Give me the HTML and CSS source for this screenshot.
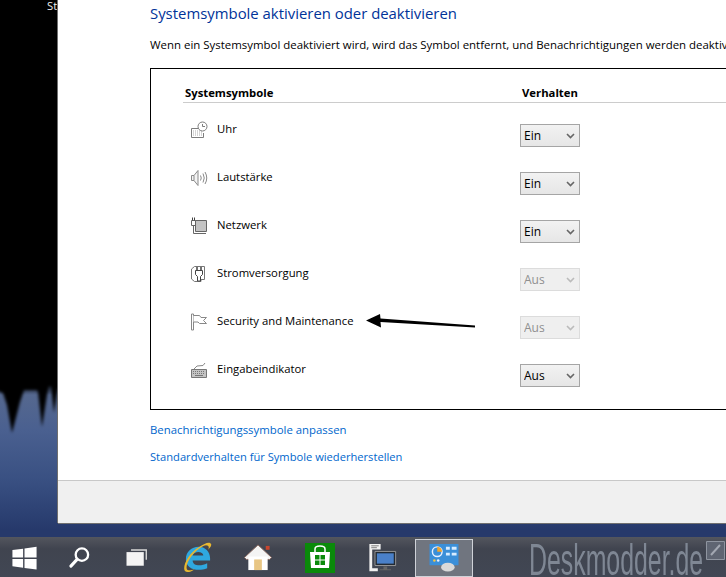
FILE: index.html
```html
<!DOCTYPE html>
<html lang="de">
<head>
<meta charset="utf-8">
<title>Systemsymbole</title>
<link rel="stylesheet" href="styles.css">
</head>
<body>
<div class="desk">
  <div class="wall">
    <span class="wall-label">Start</span>
    <svg class="spikes" width="58" height="100" viewBox="0 0 58 100"><defs><filter id="b"><feGaussianBlur stdDeviation="1.800"/></filter></defs><path filter="url(#b)" d="M-4-6H62V48H58L54 73 51 46H49L47 55 42 87 38 52 37 50H24L20 62 12 93 7 65 3 53-4 50Z" fill="#000"/></svg>
  </div>
  <main class="window">
    <div class="content">
      <h1 class="title">Systemsymbole aktivieren oder deaktivieren</h1>
      <p class="desc">Wenn ein Systemsymbol deaktiviert wird, wird das Symbol entfernt, und Benachrichtigungen werden deaktiviert.</p>
      <section class="box">
        <div class="head"><span class="col-a">Systemsymbole</span><span class="col-b">Verhalten</span></div>
        <div class="row">
          <div class="name"><svg class="ico" viewBox="0 0 18 18" fill="none" stroke="#7d7d7d"><path d="M1.500 7.500H9M1.500 7.500V16.500H13.500V12" /><path d="M3 10H12M3 12H12M3 14H12" stroke="#aaa" stroke-dasharray="1 1"/><circle cx="12.500" cy="5.500" r="4.500" fill="#fff"/><path d="M12.500 3V5.500H15"/></svg><span class="label">Uhr</span></div>
          <div class="pick"><select><option>Ein</option></select><svg class="chev" viewBox="0 0 9 6"><path d="M1 1L4.500 4.500 8 1" fill="none" stroke="#666" stroke-width="1.600"/></svg></div>
        </div>
        <div class="row">
          <div class="name"><svg class="ico" viewBox="0 0 18 18" fill="none" stroke="#8a8a8a"><path d="M1.500 6.500H4V11.500H1.500ZM4 6.500L8 1.500V16.500L4 11.500" fill="#f4f4f4"/><path d="M10.500 6.500Q12 9 10.500 11.500M13 4.500Q15.500 9 13 13.500M15 3Q18.500 9 15 15"/></svg><span class="label">Lautstärke</span></div>
          <div class="pick"><select><option>Ein</option></select><svg class="chev" viewBox="0 0 9 6"><path d="M1 1L4.500 4.500 8 1" fill="none" stroke="#666" stroke-width="1.600"/></svg></div>
        </div>
        <div class="row">
          <div class="name"><svg class="ico" viewBox="0 0 18 18" fill="none" stroke="#666"><path d="M5.500 3.500H16.500V14.500H5.500Z" fill="#c4c4c4"/><path d="M1.500 3.500H5.500V8.500H1.500ZM3.500 8.500V16.500H16"/><path d="M2.500 0.500V3.500M4.500 0.500V3.500" stroke="#444"/></svg><span class="label">Netzwerk</span></div>
          <div class="pick"><select><option>Ein</option></select><svg class="chev" viewBox="0 0 9 6"><path d="M1 1L4.500 4.500 8 1" fill="none" stroke="#666" stroke-width="1.600"/></svg></div>
        </div>
        <div class="row">
          <div class="name"><svg class="ico" viewBox="0 0 18 18" fill="none" stroke="#777"><path d="M4.500 1.500H14.500V14.500H11V16.500H4.500L1.500 14V4Z"/><path d="M7 2V5.500M11 2V5.500" stroke="#444" stroke-width="1.500"/><path d="M5.500 5.500H12.500V9.500L10.500 11.500V16H7.500V11.500L5.500 9.500Z" fill="#fff" stroke="#444"/></svg><span class="label">Stromversorgung</span></div>
          <div class="pick"><select disabled><option>Aus</option></select><svg class="chev" viewBox="0 0 9 6"><path d="M1 1L4.500 4.500 8 1" fill="none" stroke="#bbb" stroke-width="1.600"/></svg></div>
        </div>
        <div class="row">
          <div class="name"><svg class="ico" viewBox="0 0 18 18" fill="none" stroke="#888"><path d="M1.500 1V17H3.500V1Z"/><path d="M3.500 2.500H9.500L11 4.500H16.500L13.500 7.500 16.500 10.500H9.500L8 9H3.500" fill="#fff"/></svg><span class="label">Security and Maintenance</span></div>
          <div class="pick"><select disabled><option>Aus</option></select><svg class="chev" viewBox="0 0 9 6"><path d="M1 1L4.500 4.500 8 1" fill="none" stroke="#bbb" stroke-width="1.600"/></svg></div>
        </div>
        <div class="row">
          <div class="name"><svg class="ico" viewBox="0 0 18 18" fill="none" stroke="#777"><path d="M1.500 8.500H16.500V16.500H1.500Z" fill="#c4c4c4"/><path d="M3 10.500H15M3 12.500H15" stroke="#777" stroke-dasharray="1 1"/><path d="M5 14.500H13"/><path d="M4 8L7 5 13 4.500 15 2" stroke="#888"/></svg><span class="label">Eingabeindikator</span></div>
          <div class="pick"><select><option>Aus</option></select><svg class="chev" viewBox="0 0 9 6"><path d="M1 1L4.500 4.500 8 1" fill="none" stroke="#666" stroke-width="1.600"/></svg></div>
        </div>
        <svg class="arrow" width="112" height="16" viewBox="0 0 112 16"><path d="M1 6.500L15 0 15.500 4.500 110 11.500 110 13.500 15.500 8 16 13.500Z" fill="#000"/></svg>
      </section>
      <nav class="links">
        <a href="#">Benachrichtigungssymbole anpassen</a>
        <a href="#">Standardverhalten für Symbole wiederherstellen</a>
      </nav>
    </div>
    <footer class="foot"></footer>
  </main>
</div>
<div class="taskbar">
  <div class="tb tb-start"><svg width="27" height="26" viewBox="0 0 28 28"><path d="M1 5.500L12.500 4V13.500H1ZM14 3.800L27 2V13.500H14ZM1 15H12.500V24.500L1 23ZM14 15H27V26.500L14 24.700Z" fill="#fff"/></svg></div>
  <div class="tb tb-narrow"><svg width="23" height="23" viewBox="0 0 24 24"><circle cx="14.500" cy="9" r="6.500" fill="none" stroke="#fff" stroke-width="2.400"/><path d="M9.500 14L3 21" stroke="#fff" stroke-width="3.200" stroke-linecap="round"/></svg></div>
  <div class="tb tb-narrow"><svg width="23" height="20" viewBox="0 0 24 22"><path d="M6 1.500H23.500V13H22V3H6Z" fill="#d8d8d8"/><path d="M1 4.500H20V19.500H1Z" fill="#f4f4f4"/></svg></div>
  <div class="tb"><svg width="31" height="31" viewBox="0 0 32 32"><path d="M4 18C4 10 10 5 17 5 24 5 29 10 29 17V19H11C11 24 18 26 26 22V27C16 31 4 28 4 18ZM11 14H22C22 9 12 9 11 14Z" fill="#2fa8e0"/><path d="M3 30C0 26 6 12 18 5 23 2 28-1 30 2 31 4 28 7 27 8 29 4 26 2.500 22 4 12 9 3 22 5 28 6 30 10 29 13 28 9 31 5 32 3 30Z" fill="#e8b830"/></svg></div>
  <div class="tb"><svg width="30" height="29" viewBox="0 0 30 30"><path d="M15 2L29 15 27 17H3L1 15Z" fill="#f4f4f4" stroke="#8a6a60"/><path d="M5 14H25V28H5Z" fill="#fff"/><path d="M11 17H19V28H11Z" fill="#e8c684"/><path d="M23 3H27V7H23Z" fill="#c8452e"/></svg></div>
  <div class="tb tb-gap"><svg width="32" height="32" viewBox="0 0 32 32"><path d="M1 1H31V31H1Z" fill="#0a8a0a"/><path d="M6 10H26L25 26H7Z" fill="#fff"/><path d="M11 10V7C11 3 21 3 21 7V10" fill="none" stroke="#fff" stroke-width="1.500"/><path d="M11 13H15.500V17.500H11ZM16.500 13H21V17.500H16.500ZM11 18.500H15.500V23H11ZM16.500 18.500H21V23H16.500Z" fill="#0a8a0a"/></svg></div>
  <div class="tb tb-gap"><svg width="29" height="30" viewBox="0 0 30 32"><path d="M1 1H13V7H4V27H10V30H1Z" fill="#f0f0f0"/><path d="M3 3H11M3 5H9" stroke="#777"/><path d="M7 9H29V24H7Z" fill="#222a33" stroke="#999"/><path d="M9 11H27V22H9Z" fill="#4a80c8"/><path d="M16 25H20V28H24V29H12V28H16Z" fill="#666"/></svg></div>
  <div class="tb tb-active"><svg width="32" height="29" viewBox="0 0 32 30"><path d="M1 1H31V23H1Z" fill="#3b8fd8"/><circle cx="9" cy="9" r="5" fill="none" stroke="#e8f0ff" stroke-width="1.500"/><path d="M9 4A5 5 0 0 1 14 9H9Z" fill="#f5a52a"/><path d="M18 4H22V7H18ZM24 4H29V7H24ZM18 10H22V13H18ZM24 10H29V13H24Z" fill="#d7ecff"/><circle cx="6" cy="18" r="1.300" fill="#f5c542"/><circle cx="10" cy="18" r="1.300" fill="#e8f0ff"/><ellipse cx="20" cy="25" rx="7" ry="4.500" fill="#d9d9d9"/></svg></div>
  <span class="mark">Deskmodder.de</span>
  <svg class="mark-ico" width="19" height="19" viewBox="0 0 19 19"><path d="M.5.5H18.500V18.500H.5Z" fill="#5f6572" stroke="#8f95a0"/><path d="M14 4L5 14" stroke="#a3a8b2" stroke-width="2"/></svg>
</div>
</body>
</html>
```
FILE: styles.css
```css
* { box-sizing: border-box; }
html, body { margin: 0; height: 100%; }
body {
  width: 726px;
  height: 577px;
  overflow: hidden;
  display: flex;
  flex-direction: column;
  font-family: "Open Sans", "Noto Sans", sans-serif;
  font-size: 11.3px;
  color: #000;
  background: #24396c;
}
.desk {
  flex: 1;
  display: flex;
  min-height: 0;
  align-items: flex-start;
  background: linear-gradient(#000 0, #000 380px, #55688f 395px, #4a6090 430px, #395082 480px, #26396b 530px);
}
.wall {
  position: relative;
  width: 58px;
  flex: none;
  height: 523px;
  overflow: hidden;
  border-right: 1px solid #6f6f6f;
}
.wall-label {
  position: absolute;
  left: 47px;
  top: -2px;
  color: #eee;
  white-space: nowrap;
}
.spikes { position: absolute; left: 0; top: 340px; }
.window {
  width: 668px;
  height: 524px;
  background: #fff;
  display: flex;
  flex-direction: column;
  overflow: hidden;
  border-bottom: 1px solid #6f6f6f;
}
.content { flex: 1; padding-left: 92px; min-height: 0; }
.title {
  margin: 2px 0 0;
  font-size: 14.9px;
  line-height: 22px;
  font-weight: 400;
  color: #003399;
  white-space: nowrap;
}
.desc {
  margin: 11px 0 0;
  line-height: 20px;
  height: 20px;
  font-size: 11.45px;
  white-space: nowrap;
}
.box {
  position: relative;
  margin-top: 13px;
  width: 640px;
  height: 342px;
  border: 1px solid #000;
  padding: 14px 0 0 32px;
}
.head {
  display: flex;
  height: 20px;
  line-height: 20px;
  font-weight: 700;
  border-bottom: 1px solid #ccc;
  padding-left: 2px;
  margin-bottom: 8px;
}
.col-a { width: 337px; }
.row {
  display: flex;
  height: 48px;
  padding: 8px 0 0 7px;
}
.row .name { display: flex; gap: 9px; width: 330px; }
.ico { width: 18px; height: 18px; margin-top: 2px; flex: none; }
.label { line-height: 20px; }
.pick { position: relative; width: 60px; height: 23px; margin-top: 5px; }
.pick select {
  appearance: none;
  -webkit-appearance: none;
  width: 60px;
  height: 23px;
  padding: 0 0 0 3px;
  border: 1px solid #a5a5a5;
  border-radius: 0;
  background: linear-gradient(#f2f2f2, #e6e6e6);
  font: inherit;
  font-size: 12px;
  color: #000;
  opacity: 1;
}
.pick select:disabled {
  border-color: #dcdcdc;
  background: #efefef;
  color: #8f8f8f;
}
.chev {
  position: absolute;
  right: 5px;
  top: 9px;
  width: 9px;
  height: 6px;
  pointer-events: none;
}
.arrow { position: absolute; left: 214px; top: 245px; }
.links { display: flex; flex-direction: column; gap: 7px; margin-top: 10px; }
.links a { color: #0066cc; text-decoration: none; line-height: 20px; font-size: 11.15px; }
.links a:first-child { font-size: 11.38px; }
.foot {
  flex: none;
  height: 43px;
  background: #f0f0f0;
  border-top: 1px solid #c8c8c8;
}
.taskbar {
  position: relative;
  flex: none;
  height: 40px;
  display: flex;
  align-items: center;
  padding-left: 7px;
  background: linear-gradient(#53565e, #40444f 30%, #414754);
  overflow: hidden;
}
.tb {
  width: 61px;
  height: 38px;
  display: flex;
  align-items: center;
  justify-content: center;
  margin-top: 1px;
  flex: none;
}
.tb-start { width: 34px; margin-right: 9.500px; }
.tb-narrow { width: 57px; }
.tb-narrow + .tb:not(.tb-narrow) { margin-left: 2px; }
.tb-gap { margin-left: 1px; }
.tb-active {
  width: 58px;
  margin-left: 2.500px;
  background: #70757f;
  border: 1px solid #cfd2d8;
}
.mark {
  position: absolute;
  left: 529px;
  top: -2px;
  font-family: "Liberation Sans", sans-serif;
  font-size: 44px;
  line-height: 50px;
  color: #7f8794;
  white-space: nowrap;
  transform: scaleX(.565);
  transform-origin: 0 0;
}
.mark-ico { position: absolute; left: 706px; top: 4px; }
```
